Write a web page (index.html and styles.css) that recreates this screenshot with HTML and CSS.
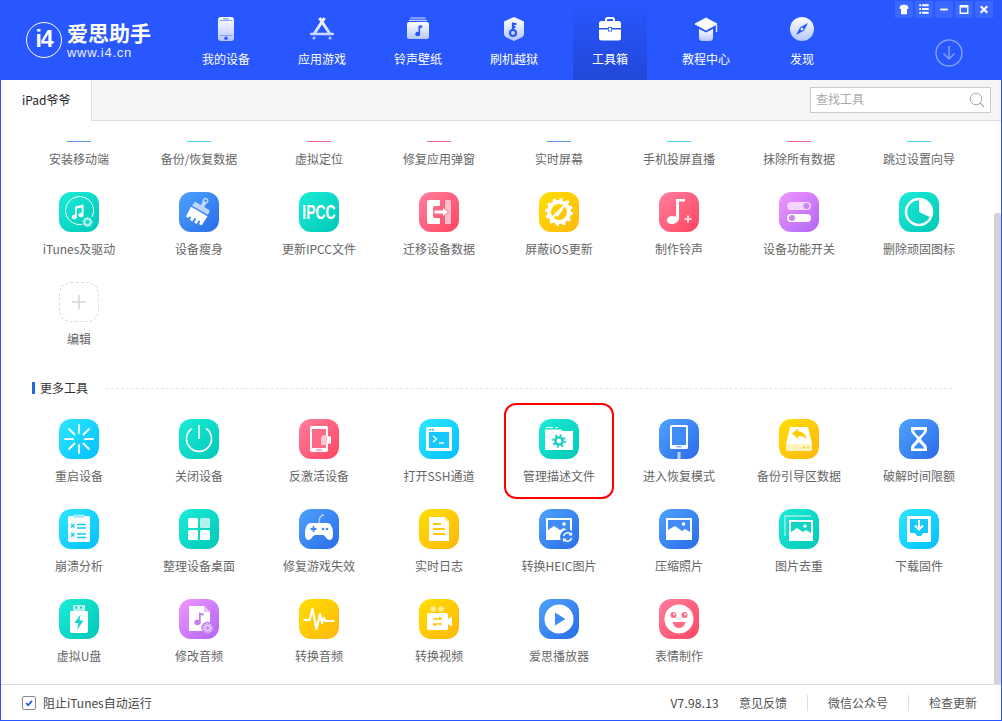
FILE: index.html
```html
<!DOCTYPE html>
<html lang="zh-CN">
<head>
<meta charset="utf-8">
<title>爱思助手</title>
<link rel="stylesheet" href="styles.css">
</head>
<body>
<svg class="defs" width="0" height="0" aria-hidden="true">
  <defs>
    <linearGradient id="hg" x1="0" y1="0" x2="0" y2="1"><stop offset="0" stop-color="#fff"/><stop offset="1" stop-color="#b4c6ff"/></linearGradient>
    <linearGradient id="hgu" gradientUnits="userSpaceOnUse" x1="0" y1="0" x2="0" y2="24"><stop offset="0" stop-color="#fff"/><stop offset="1" stop-color="#b4c6ff"/></linearGradient>
  </defs>
</svg>
<div class="window">
  <header class="header">
    <div class="logo">
      <div class="logo-mark">i4</div>
      <div class="logo-text">
        <div class="logo-name">爱思助手</div>
        <div class="logo-url">www.i4.cn</div>
      </div>
    </div>
    <nav class="nav">
      <div class="nav-item">
        <svg class="nav-icon" viewBox="0 0 24 24"><rect x="4" y="0" width="16" height="24" rx="3" fill="url(#hg)"/><rect x="5.500" y="3" width="13" height=".9" fill="#7e9cff"/><rect x="5.500" y="18" width="13" height=".9" fill="#7e9cff"/><rect x="9" y="1.200" width="6" height="1.200" rx=".6" fill="#7e9cff"/><circle cx="12" cy="21.200" r="1.700" fill="#2857ff"/></svg>
        <span>我的设备</span>
      </div>
      <div class="nav-item">
        <svg class="nav-icon" viewBox="0 0 24 24"><path d="M9.500 1 20 17M14.500 1 4 17" stroke="url(#hgu)" stroke-width="3" fill="none"/><rect x="0" y="15.800" width="24" height="2.400" rx="1.200" fill="url(#hgu)"/><circle cx="4" cy="21" r="1.500" fill="#b4c6ff"/><circle cx="20" cy="21" r="1.500" fill="#b4c6ff"/></svg>
        <span>应用游戏</span>
      </div>
      <div class="nav-item">
        <svg class="nav-icon" viewBox="0 0 24 24"><rect x="4.500" y="0.500" width="15" height="1" fill="#dfe6ff"/><rect x="3" y="2.800" width="18" height="1" fill="#eef2ff"/><path d="M1 7a2 2 0 0 1 2-2h18a2 2 0 0 1 2 2v13a2 2 0 0 1-2 2H3a2 2 0 0 1-2-2z" fill="url(#hg)"/><path d="M12.500 8.500h3.800v2.200h-2.200v6.200a2.400 2.200 0 1 1-1.600-2z" fill="#2857ff"/></svg>
        <span>铃声壁纸</span>
      </div>
      <div class="nav-item">
        <svg class="nav-icon" viewBox="0 0 24 24"><path d="M12 0 22 4.500V17q0 2-2 3.200L12 24 4 20.200Q2 19 2 17V4.500z" fill="url(#hg)"/><circle cx="11" cy="16" r="3" fill="none" stroke="#2857ff" stroke-width="2.200"/><path d="M11 13V5.500M11 7h3.500M11 10h2.500" stroke="#2857ff" stroke-width="2.200" fill="none"/></svg>
        <span>刷机越狱</span>
      </div>
      <div class="nav-item active">
        <svg class="nav-icon" viewBox="0 0 24 24"><path d="M8 4V2.500Q8 1 9.500 1h5Q16 1 16 2.500V4" fill="none" stroke="#fff" stroke-width="2"/><path d="M1 6.500Q1 4 3.500 4h17Q23 4 23 6.500V11H14v-1h-4v1H1z" fill="#fff"/><path d="M1 13h9v2h4v-2h9v8.500q0 2.500-2.500 2.500h-17Q1 24 1 21.500z" fill="#fff" transform="translate(0 -.5)"/><rect x="10.800" y="10.800" width="2.400" height="3" fill="#fff"/></svg>
        <span>工具箱</span>
      </div>
      <div class="nav-item">
        <svg class="nav-icon" viewBox="0 0 24 24"><path d="M5 12v8.500Q5 24 8.500 24h7q3.500 0 3.500-3.500V12l-7 3.500z" fill="url(#hg)"/><path d="M12 1 23 7 12 13 1 7z" fill="#fff" stroke="#fff" stroke-linejoin="round"/><rect x="21.800" y="8" width="1.400" height="7" fill="#dfe6ff"/></svg>
        <span>教程中心</span>
      </div>
      <div class="nav-item">
        <svg class="nav-icon" viewBox="0 0 24 24"><circle cx="12" cy="12" r="12" fill="url(#hg)"/><path d="M18 6 13.800 13.800 6 18 10.200 10.200z" fill="#2857ff"/><circle cx="12" cy="12" r="1.500" fill="#dfe6ff"/></svg>
        <span>发现</span>
      </div>
    </nav>
    <div class="download">
      <svg viewBox="0 0 28 28" width="28" height="28"><circle cx="14" cy="14" r="13" fill="none" stroke="#7f9dff" stroke-width="1.500"/><path d="M14 7v13M8.500 14.500 14 20l5.500-5.500" fill="none" stroke="#7f9dff" stroke-width="1.500"/></svg>
    </div>
    <div class="win-btns">
      <div class="win-btn"><svg viewBox="0 0 18 18"><path d="M5 5 7.500 4h3L13 5l1 3-1.800.6V14H5.800V8.600L4 8z" fill="#fff"/></svg></div>
      <div class="win-btn"><svg viewBox="0 0 18 18"><path d="M4 4.500h2M7 4.500h7M4 8.500h2M7 8.500h7M4 12.500h2M7 12.500h7" stroke="#fff" stroke-width="2"/></svg></div>
      <div class="win-btn"><svg viewBox="0 0 18 18"><rect x="5" y="8" width="8" height="2" fill="#fff"/></svg></div>
      <div class="win-btn"><svg viewBox="0 0 18 18"><path d="M5 5h8v8H5z" fill="none" stroke="#fff" stroke-width="1.400"/><rect x="5" y="5" width="8" height="2" fill="#fff"/></svg></div>
      <div class="win-btn"><svg viewBox="0 0 18 18"><path d="M5.500 5.500l7 7M12.500 5.500l-7 7" stroke="#fff" stroke-width="2.200"/></svg></div>
    </div>
  </header>

  <div class="tabbar">
    <div class="tab">iPad爷爷</div>
    <div class="search">
      <span class="search-text">查找工具</span>
      <svg class="search-icon" viewBox="0 0 16 16" width="16" height="16"><circle cx="7" cy="7" r="5.800" fill="none" stroke="#aaa" stroke-width="1"/><path d="M11.200 11.200 15 15" stroke="#aaa" stroke-width="1.200"/></svg>
    </div>
  </div>

  <main class="main">
    <div class="grid">
      <div class="cell"><div class="stub s-blue"></div><div class="label">安装移动端</div></div>
      <div class="cell"><div class="stub s-cyan"></div><div class="label">备份/恢复数据</div></div>
      <div class="cell"><div class="stub s-pink"></div><div class="label">虚拟定位</div></div>
      <div class="cell"><div class="stub s-pink"></div><div class="label">修复应用弹窗</div></div>
      <div class="cell"><div class="stub s-blue"></div><div class="label">实时屏幕</div></div>
      <div class="cell"><div class="stub s-cyan"></div><div class="label">手机投屏直播</div></div>
      <div class="cell"><div class="stub s-pink"></div><div class="label">抹除所有数据</div></div>
      <div class="cell"><div class="stub s-cyan"></div><div class="label">跳过设置向导</div></div>

      <div class="cell"><div class="icon teal"><svg viewBox="0 0 40 40"><path d="M27 31A14 14 0 1 1 33 25" fill="none" stroke="#fff" stroke-width="1"/><path d="M16 14.500 24.500 12.500V23a2.500 2.200 0 1 1-1.800-2V15.500L17.800 16.600V25a2.500 2.200 0 1 1-1.800-2z" fill="#fff"/><circle cx="28.500" cy="30" r="6" fill="#10d5c3"/><circle cx="28.500" cy="30" r="3" fill="none" stroke="#a9f2ea" stroke-width="2"/><circle cx="28.500" cy="30" r="4.300" fill="none" stroke="#a9f2ea" stroke-width="1.400" stroke-dasharray="1.500 1.200"/></svg></div><div class="label">iTunes及驱动</div></div>
      <div class="cell"><div class="icon blue"><svg viewBox="0 0 40 40"><g transform="rotate(30 20 20)"><path d="M11 15Q11 13 13 13h5V9.500a2 2 0 0 1 4 0V13h5q2 0 2 2v3H11z" fill="#bcd6ff"/><circle cx="20" cy="7" r="2.200" fill="none" stroke="#bcd6ff" stroke-width="1.500"/><path d="M10.500 19.500h19l-.5 11h-3v-3h-2v4h-3v-4h-2v4h-3v-3h-2v2h-3z" fill="#fff"/></g></svg></div><div class="label">设备瘦身</div></div>
      <div class="cell"><div class="icon teal"><svg viewBox="0 0 40 40"><text class="ipcc" x="20" y="19.300" text-anchor="middle" transform="scale(1 1.400)">IPCC</text></svg></div><div class="label">更新IPCC文件</div></div>
      <div class="cell"><div class="icon pink"><svg viewBox="0 0 40 40"><path d="M8 10Q8 8 10 8H21V14H16a2 2 0 0 0-2 2V24a2 2 0 0 0 2 2H21V32H10Q8 32 8 30z" fill="#fff"/><rect x="26" y="8" width="6" height="24" rx="1.500" fill="#ffc0cc"/><path d="M14 17.500h9V14l7 6-7 6v-3.500h-9z" fill="#ff6a86"/><path d="M15.500 18.500h8.500v-2.500l5 4-5 4v-2.500h-8.500z" fill="#fff"/></svg></div><div class="label">迁移设备数据</div></div>
      <div class="cell"><div class="icon yellow"><svg viewBox="0 0 40 40"><circle cx="20" cy="20" r="10" fill="none" stroke="#fff" stroke-width="4"/><circle cx="20" cy="20" r="12.500" fill="none" stroke="#fff" stroke-width="3" stroke-dasharray="3 3.540"/><path d="M11 28 30 9" stroke="#fff" stroke-width="2"/><path d="M16 21l2.500 2.500 5-7" fill="none" stroke="#fff" stroke-width="2"/></svg></div><div class="label">屏蔽iOS更新</div></div>
      <div class="cell"><div class="icon pink"><svg viewBox="0 0 40 40"><path d="M17 7h9v2.500h-6V26c0 3.500-3.500 6-7 6s-5.500-2-5-4.500c.5-2.500 3.500-4.500 9-3z" fill="#fff"/><path d="M29 23.500v7M25.500 27h7" stroke="#ffd7de" stroke-width="2"/></svg></div><div class="label">制作铃声</div></div>
      <div class="cell"><div class="icon purple"><svg viewBox="0 0 40 40"><rect x="8" y="10" width="24" height="8" rx="4" fill="#f3d6ff"/><circle cx="27.500" cy="14" r="3" fill="#cf86f5"/><rect x="8" y="22" width="24" height="8" rx="4" fill="#fff"/><circle cx="13" cy="26" r="3" fill="#cf86f5"/></svg></div><div class="label">设备功能开关</div></div>
      <div class="cell"><div class="icon teal"><svg viewBox="0 0 40 40"><circle cx="20" cy="20" r="13" fill="none" stroke="#fff" stroke-width="2.500"/><path d="M20 7A13 13 0 0 1 31.700 25.600L20 20z" fill="#fff"/></svg></div><div class="label">删除顽固图标</div></div>

      <div class="cell"><div class="icon add"><svg viewBox="0 0 38 38"><path d="M19 12v14M12 19h14" stroke="#d6d6d6" stroke-width="1.500"/></svg></div><div class="label">编辑</div></div>
    </div>

    <div class="section">
      <span class="section-bar"></span>
      <span class="section-title">更多工具</span>
      <span class="section-line"></span>
    </div>

    <div class="grid more">
      <div class="cell"><div class="icon cyan"><svg viewBox="0 0 40 40"><path d="M20 6v8M20 26v8M6 20h8M26 20h8M10 10l5.500 5.500M24.500 24.500 30 30M30 10l-5.500 5.500M15.500 24.500 10 30" stroke="#fff" stroke-width="1.800" stroke-linecap="round"/></svg></div><div class="label">重启设备</div></div>
      <div class="cell"><div class="icon teal"><svg viewBox="0 0 40 40"><path d="M13 9.500A12.500 12.500 0 1 0 27 9.500" fill="none" stroke="#fff" stroke-width="1.600"/><path d="M20 6v14" stroke="#fff" stroke-width="1.600"/></svg></div><div class="label">关闭设备</div></div>
      <div class="cell"><div class="icon pink"><svg viewBox="0 0 40 40"><rect x="11" y="7" width="18" height="26" rx="2" fill="#fff"/><rect x="13" y="10" width="14" height="19" fill="#ff6a86"/><rect x="17" y="30.500" width="6" height="1" fill="#ff6a86"/><path d="M22 20q0-4 4-4h2v10h-6z" fill="#ffc4ce"/><path d="M29 18.500l3-1.500v8l-3-1.500z" fill="#fff"/><rect x="28" y="17" width="2" height="8" fill="#fff"/></svg></div><div class="label">反激活设备</div></div>
      <div class="cell"><div class="icon cyan"><svg viewBox="0 0 40 40"><rect x="7" y="8" width="26" height="24" rx="1.500" fill="#fff"/><rect x="10" y="13" width="20" height="16" fill="#16c8fb"/><rect x="10" y="10" width="2" height="1.500" fill="#16c8fb"/><rect x="13" y="10" width="2" height="1.500" fill="#16c8fb"/><path d="M14 17l3.500 3-3.500 3" fill="none" stroke="#fff" stroke-width="1.500"/><path d="M20 24h5" stroke="#fff" stroke-width="1.500"/></svg></div><div class="label">打开SSH通道</div></div>
      <div class="cell"><div class="icon teal"><svg viewBox="0 0 40 40"><path d="M6 12h28v18a1 1 0 0 1-1 1H7a1 1 0 0 1-1-1z" fill="#fff"/><path d="M7 8.500h7M16 8.500h3" stroke="#fff" stroke-width="1"/><path d="M6 10.500h16l2 2H6z" fill="#fff"/><circle cx="20" cy="22" r="3.600" fill="none" stroke="#0fcfbd" stroke-width="2.400"/><circle cx="20" cy="22" r="5.800" fill="none" stroke="#0fcfbd" stroke-width="2" stroke-dasharray="2 2.550"/></svg></div><div class="label">管理描述文件</div></div>
      <div class="cell"><div class="icon blue"><svg viewBox="0 0 40 40"><rect x="11" y="6" width="18" height="24" rx="1.500" fill="#fff"/><rect x="13" y="8" width="14" height="18" fill="#3f8cf8"/><rect x="17.500" y="27.300" width="5" height="1" fill="#3f8cf8"/><path d="M20 33v7" stroke="#bcd6ff" stroke-width="3"/></svg></div><div class="label">进入恢复模式</div></div>
      <div class="cell"><div class="icon yellow"><svg viewBox="0 0 40 40"><path d="M11 8h18l4 17H7z" fill="#fff"/><path d="M7 25h26v6a1 1 0 0 1-1 1H8a1 1 0 0 1-1-1z" fill="#fff2bf"/><circle cx="25" cy="28.500" r="1" fill="#ffcf00"/><circle cx="29" cy="28.500" r="1" fill="#ffcf00"/><path d="M13 14.500l6-5v3c4.500 0 8 2.500 8.500 8-2-3-4.500-3.500-8.500-3.500v3z" fill="#ffcc00"/></svg></div><div class="label">备份引导区数据</div></div>
      <div class="cell"><div class="icon blue"><svg viewBox="0 0 40 40"><path d="M12 8h16v3c0 4-5 6-6 9 1 3 6 5 6 9v3H12v-3c0-4 5-6 6-9-1-3-6-5-6-9z" fill="#fff"/><path d="M15 11h10c0 3-3.500 5-5 7-1.500-2-5-4-5-7z" fill="#3f8cf8"/><path d="M15 29.500c0-2 3.500-4.500 5-6.500 1.500 2 5 4.500 5 6.500z" fill="#3f8cf8"/></svg></div><div class="label">破解时间限额</div></div>

      <div class="cell"><div class="icon cyan"><svg viewBox="0 0 40 40"><rect x="9" y="7" width="22" height="26" rx="1.500" fill="#fff"/><rect x="14" y="5.500" width="12" height="3.500" rx="1.500" fill="#a8ecff"/><path d="M18 15.500h9M18 19h9M18 25h9M18 28.500h9" stroke="#16c8fb" stroke-width="1.500"/><path d="M12 15l3.500 3.500M15.500 15 12 18.500M12 24l3.500 3.500M15.500 24 12 27.500" stroke="#16c8fb" stroke-width="1.300"/></svg></div><div class="label">崩溃分析</div></div>
      <div class="cell"><div class="icon teal"><svg viewBox="0 0 40 40"><rect x="9" y="9" width="10" height="10" rx="1.500" fill="#fff"/><rect x="21" y="9" width="10" height="10" rx="1.500" fill="#b3f3eb"/><rect x="9" y="21" width="10" height="10" rx="1.500" fill="#fff"/><rect x="21" y="21" width="10" height="10" rx="1.500" fill="#fff"/></svg></div><div class="label">整理设备桌面</div></div>
      <div class="cell"><div class="icon blue"><svg viewBox="0 0 40 40"><path d="M20 14q0-8 5-8" fill="none" stroke="#bcd6ff" stroke-width="1.300"/><path d="M12 14h16c4 0 6 5 6 10 0 5-1 7-3.500 7-3 0-4-5-7-5h-7c-3 0-4 5-7 5C7 31 6 29 6 24c0-5 2-10 6-10z" fill="#fff"/><path d="M11.500 20h6M14.500 17v6" stroke="#3f8cf8" stroke-width="1.800"/><circle cx="24" cy="20" r="1.300" fill="#3f8cf8"/><circle cx="28" cy="20" r="1.300" fill="#3f8cf8"/></svg></div><div class="label">修复游戏失效</div></div>
      <div class="cell"><div class="icon yellow"><svg viewBox="0 0 40 40"><path d="M10 8h16l4 4v20H10z" fill="#fff"/><path d="M26 8l4 4h-4z" fill="#ffe98a"/><path d="M14 15h8M14 20h12M14 25h12" stroke="#ffc800" stroke-width="1.800"/></svg></div><div class="label">实时日志</div></div>
      <div class="cell"><div class="icon blue"><svg viewBox="0 0 40 40"><rect x="7" y="9" width="26" height="22" fill="#fff"/><rect x="9" y="11" width="22" height="18" fill="#3f8cf8"/><path d="M9 29V21l6-4 6 4 4-2 6 4v6z" fill="#fff"/><circle cx="25" cy="15" r="1.800" fill="#fff"/><circle cx="28.500" cy="28" r="7.500" fill="#3a82f2"/><path d="M24.500 27a4.200 4.200 0 0 1 7.500-1.500M32.500 29a4.200 4.200 0 0 1-7.500 1.500" fill="none" stroke="#fff" stroke-width="1.400"/><path d="M33 23v3.500h-3.500zM24 33v-3.500h3.500z" fill="#fff"/></svg></div><div class="label">转换HEIC图片</div></div>
      <div class="cell"><div class="icon blue"><svg viewBox="0 0 40 40"><rect x="7" y="9" width="26" height="22" fill="#fff"/><rect x="9" y="11" width="22" height="18" fill="#3f8cf8"/><path d="M9 29V21l7-4 7 5 3-2 5 3v6z" fill="#fff"/><circle cx="24.500" cy="15" r="1.800" fill="#fff"/></svg></div><div class="label">压缩照片</div></div>
      <div class="cell"><div class="icon teal"><svg viewBox="0 0 40 40"><path d="M6 27V7h26" fill="none" stroke="#9df0e5" stroke-width="1.500"/><rect x="10" y="11" width="24" height="21" fill="#fff"/><rect x="12" y="13" width="20" height="17" fill="#10d5c3"/><path d="M12 30v-7l6-4 6 4 3-2 5 3v6z" fill="#fff"/><circle cx="26" cy="17" r="1.800" fill="#fff"/></svg></div><div class="label">图片去重</div></div>
      <div class="cell"><div class="icon cyan"><svg viewBox="0 0 40 40"><path d="M8 7h24v26H8z" fill="#fff"/><path d="M11 10h18v14h-5l-2 3h-4l-2-3h-5z" fill="#16c8fb"/><path d="M20 11v9M16 16.500l4 4 4-4" fill="none" stroke="#fff" stroke-width="2"/></svg></div><div class="label">下载固件</div></div>

      <div class="cell"><div class="icon teal"><svg viewBox="0 0 40 40"><path d="M14 6h12v6H14z" fill="#b3f3eb"/><rect x="16" y="7.500" width="2" height="2" fill="#10d5c3"/><rect x="21" y="7.500" width="2" height="2" fill="#10d5c3"/><path d="M11 12h18v20a2 2 0 0 1-2 2H13a2 2 0 0 1-2-2z" fill="#fff"/><path d="M21.500 15.500 15.500 24h4l-1.500 7 6.500-9.500h-4z" fill="#10d5c3"/></svg></div><div class="label">虚拟U盘</div></div>
      <div class="cell"><div class="icon purple"><svg viewBox="0 0 40 40"><path d="M10 7h15l6 6v18a1 1 0 0 1-1 1H10z" fill="#fff"/><path d="M25 7l6 6h-6z" fill="#e8c3fb"/><path d="M20 13.500l4.500 1v2.200l-2.800-.7v7.500a3.200 2.800 0 1 1-1.700-2.500z" fill="#c77df0"/><circle cx="28.500" cy="29" r="6.200" fill="#c77df0"/><circle cx="28.500" cy="29" r="2.500" fill="none" stroke="#e6c8fa" stroke-width="1.800"/><circle cx="28.500" cy="29" r="4.300" fill="none" stroke="#e6c8fa" stroke-width="1.500" stroke-dasharray="1.500 1.200"/></svg></div><div class="label">修改音频</div></div>
      <div class="cell"><div class="icon yellow"><svg viewBox="0 0 40 40"><path d="M5.500 21h5l3-11 4 20 3.500-15 2 9 2-5 1.500 3h8" fill="none" stroke="#fff" stroke-width="2.200" stroke-linecap="round" stroke-linejoin="round"/></svg></div><div class="label">转换音频</div></div>
      <div class="cell"><div class="icon yellow"><svg viewBox="0 0 40 40"><circle cx="14" cy="10" r="2.800" fill="#ffeb9a"/><circle cx="22" cy="10" r="2.800" fill="#ffeb9a"/><rect x="8" y="14" width="21" height="17" rx="1.500" fill="#fff"/><path d="M29 20l4-2.500v10L29 25z" fill="#fff"/><path d="M14 20h9M20 18l3 2M23 25h-9M17 27l-3-2" fill="none" stroke="#ffc800" stroke-width="1.500"/></svg></div><div class="label">转换视频</div></div>
      <div class="cell"><div class="icon blue"><svg viewBox="0 0 40 40"><circle cx="20" cy="20" r="14.500" fill="#fff"/><path d="M16 13.500 26.500 20 16 26.500z" fill="#3f8cf8"/></svg></div><div class="label">爱思播放器</div></div>
      <div class="cell"><div class="icon pink"><svg viewBox="0 0 40 40"><circle cx="20" cy="20" r="14.500" fill="#fff"/><circle cx="14.500" cy="16" r="3" fill="#ff6a86"/><circle cx="25.500" cy="16" r="3" fill="#ff6a86"/><circle cx="15.200" cy="15.300" r="1.100" fill="#fff"/><circle cx="26.200" cy="15.300" r="1.100" fill="#fff"/><path d="M13.500 23h13q-1.500 6-6.500 6t-6.500-6z" fill="#ff6a86"/></svg></div><div class="label">表情制作</div></div>
    </div>

    <div class="scroll-thumb"></div>
    <div class="highlight"></div>
  </main>

  <footer class="footer">
    <label class="check">
      <span class="checkbox"><svg viewBox="0 0 14 14" width="14" height="14"><path d="M3.500 7 6 9.500 10.500 4.500" fill="none" stroke="#2857ff" stroke-width="2"/></svg></span>
      <span>阻止iTunes自动运行</span>
    </label>
    <div class="foot-links">
      <span class="version">V7.98.13</span>
      <span>意见反馈</span>
      <i class="foot-sep"></i>
      <span>微信公众号</span>
      <i class="foot-sep"></i>
      <span>检查更新</span>
    </div>
  </footer>
</div>
</body>
</html>
```
FILE: styles.css
```css
* { box-sizing: border-box; }
html, body { margin: 0; padding: 0; background: #fff; }
body { font-family: "Noto Sans CJK SC", "Liberation Sans", sans-serif; font-size: 12px; line-height: 16px; color: #666; overflow: hidden; }
.defs { position: absolute; }
.window { width: 1002px; height: 721px; display: flex; flex-direction: column; border: 1px solid #2857ff; border-top: 0; }

.header { height: 80px; flex: none; margin: 0 -1px; background: #2857ff; display: flex; position: relative; color: #fff; }
.logo { width: 189px; flex: none; display: flex; align-items: flex-start; padding: 22px 0 0 26px; }
.logo-mark { width: 36px; height: 36px; border: 1.500px solid #fff; border-radius: 50%; font: bold 23px/32px "Liberation Sans", sans-serif; letter-spacing: -1px; text-align: center; color: #fff; flex: none; }
.logo-text { margin-left: 5px; margin-top: -1px; }
.logo-name { font-size: 21px; line-height: 22px; font-weight: 700; white-space: nowrap; }
.logo-url { font: 13px/14px "Liberation Sans", sans-serif; letter-spacing: .7px; margin-top: 3px; opacity: .9; }

.nav { display: flex; gap: 22px; }
.nav-item { width: 74px; height: 80px; padding-top: 17px; display: flex; flex-direction: column; align-items: center; gap: 10px; white-space: nowrap; }
.nav-item.active { background: linear-gradient(#2857ff, #2248d8); }
.nav-icon { width: 24px; height: 24px; display: block; flex: none; }

.download { position: absolute; left: 935px; top: 39px; width: 28px; height: 28px; }
.win-btns { position: absolute; left: 895px; top: 1px; display: flex; gap: 2px; }
.win-btn { width: 18px; height: 17px; background: #3a67ff; }
.win-btn svg { width: 18px; height: 17px; display: block; }

.tabbar { height: 41px; flex: none; background: #f5f5f5; border-bottom: 1px solid #ddd; display: flex; justify-content: space-between; }
.tab { width: 91px; height: 41px; background: #fff; border-right: 1px solid #ddd; color: #222; padding: 12px 0 0 21px; white-space: nowrap; }
.search { width: 181px; height: 26px; margin: 7px 10px 0 0; background: #fff; border: 1px solid #ccc; display: flex; align-items: center; justify-content: space-between; padding: 0 5px 2px; }
.search-text { color: #aaa; font-size: 12px; }
.search-icon { margin-top: 2px; }

.main { flex: 1; min-height: 0; position: relative; overflow: hidden; background: #fff; }
.grid { display: grid; grid-template-columns: repeat(8, 120px); padding: 20px 0 0 18px; }
.grid.more { padding-top: 0; }
.cell { display: flex; flex-direction: column; align-items: center; padding-bottom: 25px; }
.label { margin-top: 9px; line-height: 16px; white-space: nowrap; color: #666; }
.stub { width: 24px; height: 1px; }
.s-blue { background: #5b93ee; }
.s-cyan { background: #3fd3ee; }
.s-pink { background: #f2708c; }

.icon { width: 40px; height: 40px; border-radius: 12px; flex: none; }
.icon svg { width: 40px; height: 40px; display: block; }
.teal { background: linear-gradient(135deg, #1cecd8, #00c8b6); }
.blue { background: linear-gradient(135deg, #4ea3ff, #2a6be8); }
.pink { background: linear-gradient(135deg, #ff7f9e, #ff4560); }
.cyan { background: linear-gradient(135deg, #2de8ff, #04bfff); }
.yellow { background: linear-gradient(135deg, #ffdf00, #ffb70d); }
.purple { background: linear-gradient(135deg, #f097ff, #b066f4); }
.add { background: #fff; border: 1px dashed #ddd; }
.add svg { width: 38px; height: 38px; }
.ipcc { font: bold 14px "Liberation Sans Narrow", "Liberation Sans", sans-serif; fill: #fff; }

.section { display: flex; align-items: center; height: 16px; margin: 8px 0 23px 31px; }
.section-bar { width: 3px; height: 12px; background: #2563eb; }
.section-title { margin-left: 5px; color: #333; }
.section-line { width: 846px; margin-left: 18px; border-top: 1px dashed #e6e6e6; }

.scroll-thumb { position: absolute; right: 0; top: 92px; width: 7px; height: 471px; background: #d2d2d2; border-radius: 3px 3px 0 0; }
.highlight { position: absolute; left: 503px; top: 282px; width: 110px; height: 96px; border: 2px solid #f00; border-radius: 12px; pointer-events: none; }

.footer { height: 36px; flex: none; border-top: 1px solid #ddd; display: flex; align-items: center; justify-content: space-between; padding: 0 24px 0 21px; color: #444; }
.check { display: flex; align-items: center; gap: 7px; }
.checkbox { width: 14px; height: 14px; border: 1px solid #888; border-radius: 2px; display: flex; align-items: center; justify-content: center; flex: none; }
.foot-links { display: flex; align-items: center; gap: 20px; color: #555; }
.version { color: #444; letter-spacing: .2px; }
.foot-sep { width: 1px; height: 16px; background: #ddd; }
```
